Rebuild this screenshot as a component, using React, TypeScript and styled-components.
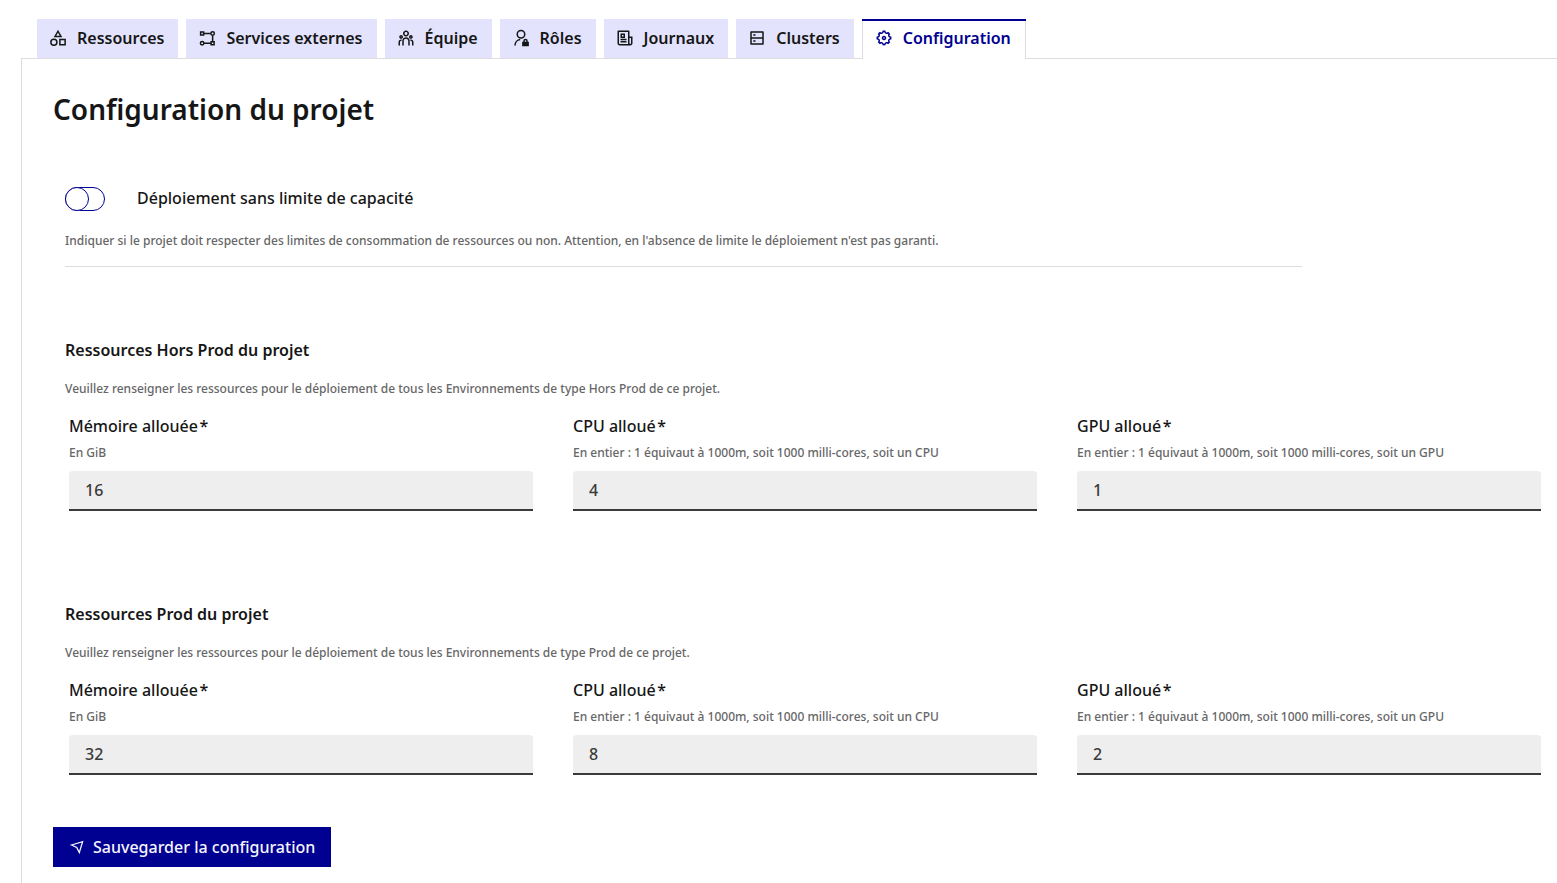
import React, { useState } from 'react';
import styled, { createGlobalStyle, css } from 'styled-components';
import { RiTeamLine, RiNewspaperLine, RiServerLine, RiSettings5Line } from 'react-icons/ri';

const GlobalStyle = createGlobalStyle`
  *, *::before, *::after { box-sizing: border-box; }
  body {
    margin: 0;
    background: #fff;
    color: #161616;
    font-family: "Noto Sans", "Open Sans", sans-serif;
    font-size: 16px;
    font-weight: 500;
    line-height: 24px;
  }
`;

const Page = styled.main`
  display: flex;
  flex-direction: column;
  min-height: 100vh;
  padding: 19px 0 0 21px;
`;

const TabList = styled.div`
  display: flex;
  align-items: flex-start;
  gap: 8px;
  padding: 0 16px;
`;

const Tab = styled.button<{ $active: boolean }>`
  display: flex;
  align-items: center;
  gap: 10px;
  height: 39px;
  padding: 0 14px 1px 12px;
  border: 0;
  background: #e3e3fd;
  color: #161616;
  font: inherit;
  font-weight: 600;
  white-space: nowrap;
  cursor: pointer;

  svg { width: 18px; height: 18px; flex: none; }

  ${({ $active }) => $active && css`
    position: relative;
    height: 40px;
    margin-bottom: -1px;
    padding: 0 15px 2px 13px;
    background: #fff;
    box-shadow: inset 1px 0 #ddd, inset -1px 0 #ddd;
    color: #000091;

    &::before {
      content: "";
      position: absolute;
      inset: 0 0 auto;
      height: 2px;
      background: #000091;
    }
  `}
`;

const Panel = styled.form`
  flex: 1;
  padding: 32px 8px 16px 31px;
  border: solid #ddd;
  border-width: 1px 0 0 1px;
`;

const Title = styled.h1`
  margin: 0 0 59px;
  font-size: 28px;
  font-weight: 600;
  line-height: 36px;
`;

const ToggleGroup = styled.div`
  width: 83.3333%;
  padding-bottom: 15px;
  border-bottom: 1px solid #ddd;
`;

const Settings = styled.div`
  padding-left: 12px;
`;

const ToggleLabel = styled.label`
  display: flex;
  align-items: flex-start;
  gap: 32px;
  margin-bottom: 20px;
  cursor: pointer;
`;

const Switch = styled.input`
  appearance: none;
  position: relative;
  width: 40px;
  height: 24px;
  margin: 1px 0 0;
  border: 1px solid #000091;
  border-radius: 12px;
  cursor: pointer;

  &::before {
    content: "";
    position: absolute;
    top: -1px;
    left: -1px;
    width: 24px;
    height: 24px;
    border: 1px solid #000091;
    border-radius: 50%;
    background: #fff;
  }

  &:checked { background: #000091; }
  &:checked::before { left: 15px; }
`;

const Hint = styled.p`
  margin: 0;
  color: #666;
  font-size: 12px;
  line-height: 20px;
`;

const Section = styled.section`
  margin-top: 71px;

  & + & { margin-top: 91px; }
`;

const SectionTitle = styled.h2`
  margin: 0 0 17px;
  font-size: 16px;
  font-weight: 600;
  line-height: 24px;
`;

const Fields = styled.div`
  display: grid;
  grid-template-columns: repeat(3, 1fr);
  gap: 40px;
  padding: 15px 8px 0 4px;
`;

const Field = styled.div`
  display: flex;
  flex-direction: column;
`;

const FieldLabel = styled.label`
  margin-bottom: 5px;
`;

const NumberInput = styled.input`
  appearance: textfield;
  width: 100%;
  height: 40px;
  margin-top: 8px;
  padding: 0 16px 2px;
  border: 0;
  border-radius: 4px 4px 0 0;
  background: #eee;
  box-shadow: inset 0 -2px #3a3a3a;
  color: #3a3a3a;
  font: inherit;

  &::-webkit-inner-spin-button { appearance: none; }
`;

const SaveButton = styled.button`
  display: inline-flex;
  align-items: center;
  gap: 8px;
  height: 40px;
  margin-top: 52px;
  padding: 0 16px;
  border: 0;
  background: #000091;
  color: #f5f5fe;
  font: inherit;
  cursor: pointer;

  svg { width: 16px; height: 16px; flex: none; }
`;

const ShapesIcon = () => (
  <svg viewBox="0 0 24 24" fill="none" stroke="currentColor" strokeWidth="2" aria-hidden="true">
    <path d="M12 3 16 10H8Z" />
    <circle cx="6.500" cy="17.500" r="4" />
    <path d="M14.500 14h7v7h-7z" />
  </svg>
);

const FlowIcon = () => (
  <svg viewBox="0 0 24 24" fill="none" stroke="currentColor" strokeWidth="2" aria-hidden="true">
    <path d="M3.500 4h4v4h-4zM17.500 17h4v4h-4zM7.500 6h9.500M19.500 8.500V17M7.500 19h10" />
    <circle cx="19.500" cy="6" r="2.300" />
    <circle cx="5.500" cy="19" r="2.300" />
  </svg>
);

const UserLockIcon = () => (
  <svg viewBox="0 0 24 24" fill="none" stroke="currentColor" strokeWidth="2" aria-hidden="true">
    <circle cx="12" cy="7" r="5" />
    <path d="M4 22a8 8 0 0 1 7-7.900" />
    <path d="M16 17.500V16a2 2 0 0 1 4 0v1.500" />
    <path d="M13.500 17h9v6h-9z" fill="currentColor" stroke="none" />
  </svg>
);

const SendIcon = () => (
  <svg viewBox="0 0 16 16" fill="none" stroke="currentColor" strokeWidth="1.300" aria-hidden="true">
    <path d="M2.500 6 13.600 2.700 10.300 13.600 7.700 8.400Z" />
  </svg>
);

const tabs = [
  { label: 'Ressources', Icon: ShapesIcon },
  { label: 'Services externes', Icon: FlowIcon },
  { label: 'Équipe', Icon: RiTeamLine },
  { label: 'Rôles', Icon: UserLockIcon },
  { label: 'Journaux', Icon: RiNewspaperLine },
  { label: 'Clusters', Icon: RiServerLine },
  { label: 'Configuration', Icon: RiSettings5Line },
];

const coreHint = (unit: string) =>
  `En entier : 1 équivaut à 1000m, soit 1000 milli-cores, soit un ${unit}`;

const fields = [
  { key: 'memory', label: 'Mémoire allouée', hint: 'En GiB' },
  { key: 'cpu', label: 'CPU alloué', hint: coreHint('CPU') },
  { key: 'gpu', label: 'GPU alloué', hint: coreHint('GPU') },
];

function ResourceSection({ id, kind, values }: { id: string; kind: string; values: number[] }) {
  return (
    <Section aria-labelledby={`${id}-title`}>
      <SectionTitle id={`${id}-title`}>Ressources {kind} du projet</SectionTitle>
      <Hint>
        Veuillez renseigner les ressources pour le déploiement de tous les Environnements de type {kind} de ce projet.
      </Hint>
      <Fields>
        {fields.map(({ key, label, hint }, index) => (
          <Field key={key}>
            <FieldLabel htmlFor={`${id}-${key}`}>{label}&#8202;*</FieldLabel>
            <Hint id={`${id}-${key}-hint`}>{hint}</Hint>
            <NumberInput
              id={`${id}-${key}`}
              type="number"
              required
              defaultValue={values[index]}
              aria-describedby={`${id}-${key}-hint`}
            />
          </Field>
        ))}
      </Fields>
    </Section>
  );
}

export default function App() {
  const [active, setActive] = useState('Configuration');

  return (
    <>
      <GlobalStyle />
      <Page>
        <TabList role="tablist">
          {tabs.map(({ label, Icon }) => (
            <Tab
              key={label}
              type="button"
              role="tab"
              aria-selected={label === active}
              $active={label === active}
              onClick={() => setActive(label)}
            >
              <Icon />
              {label}
            </Tab>
          ))}
        </TabList>
        <Panel onSubmit={(event) => event.preventDefault()}>
          <Title>Configuration du projet</Title>
          <Settings>
            <ToggleGroup>
              <ToggleLabel>
                <Switch type="checkbox" role="switch" aria-describedby="limitless-hint" />
                Déploiement sans limite de capacité
              </ToggleLabel>
              <Hint id="limitless-hint">
                Indiquer si le projet doit respecter des limites de consommation de ressources ou non. Attention, en
                l'absence de limite le déploiement n'est pas garanti.
              </Hint>
            </ToggleGroup>
            <ResourceSection id="hprod" kind="Hors Prod" values={[16, 4, 1]} />
            <ResourceSection id="prod" kind="Prod" values={[32, 8, 2]} />
          </Settings>
          <SaveButton type="submit">
            <SendIcon />
            Sauvegarder la configuration
          </SaveButton>
        </Panel>
      </Page>
    </>
  );
}
